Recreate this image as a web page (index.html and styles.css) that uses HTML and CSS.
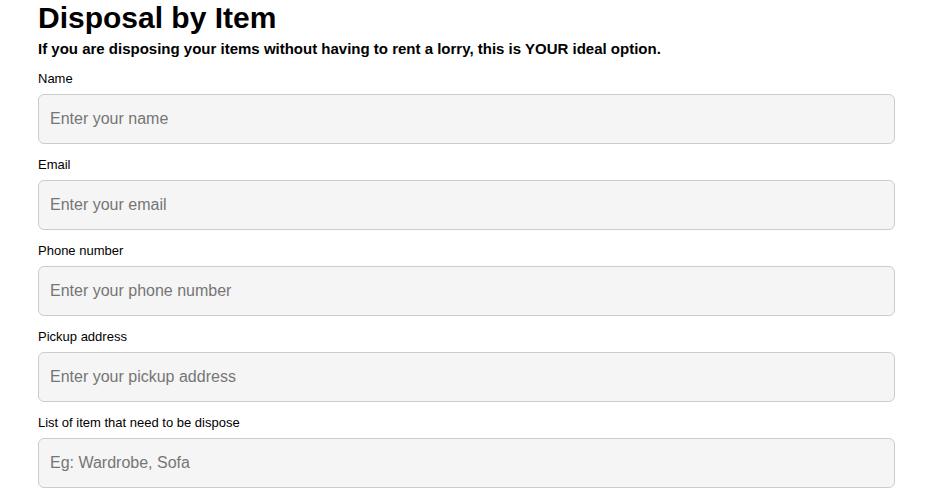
FILE: index.html
```html
<!DOCTYPE html>
<html lang="en">
<head>
    <meta charset="UTF-8">
    <meta name="viewport" content="width=device-width, initial-scale=1.0">
    <title>Disposal by Item</title>
    <link rel="stylesheet" href="styles.css">
</head>
<body>
    <div class="container">
        <h1>Disposal by Item</h1>
        <p class="intro">If you are disposing your items without having to rent a lorry, this is YOUR ideal option.</p>

        <form class="form">
            <div class="field">
                <label for="name">Name</label>
                <input type="text" id="name" placeholder="Enter your name">
            </div>
            <div class="field">
                <label for="email">Email</label>
                <input type="email" id="email" placeholder="Enter your email">
            </div>
            <div class="field">
                <label for="phone">Phone number</label>
                <input type="tel" id="phone" placeholder="Enter your phone number">
            </div>
            <div class="field">
                <label for="address">Pickup address</label>
                <input type="text" id="address" placeholder="Enter your pickup address">
            </div>
            <div class="field">
                <label for="items">List of item that need to be dispose</label>
                <input type="text" id="items" placeholder="Eg: Wardrobe, Sofa">
            </div>
        </form>
    </div>
</body>
</html>
```

FILE: styles.css
```css
body {
    font-family: 'Liberation Sans', Arial, sans-serif;
    background-color: #fff;
    margin: 0;
    padding: 0;
    color: #000;
}
.container {
    padding: 0 37px 0 38px;
}
h1 {
    font-size: 30px;
    font-weight: 700;
    line-height: 36px;
    margin: 0;
}
.intro {
    font-size: 15px;
    font-weight: 700;
    line-height: 18px;
    margin: 4px 0 13px;
}
.field {
    margin-bottom: 13px;
}
.field label {
    display: block;
    font-size: 13px;
    line-height: 16px;
    margin-bottom: 7px;
}
.field input {
    display: block;
    box-sizing: border-box;
    width: 100%;
    height: 50px;
    padding: 0 11px;
    font-family: 'Liberation Sans', Arial, sans-serif;
    font-size: 16px;
    background-color: #f5f5f5;
    border: 1px solid #ccc;
    border-radius: 6px;
}
.field input::placeholder {
    color: #757575;
}
```
